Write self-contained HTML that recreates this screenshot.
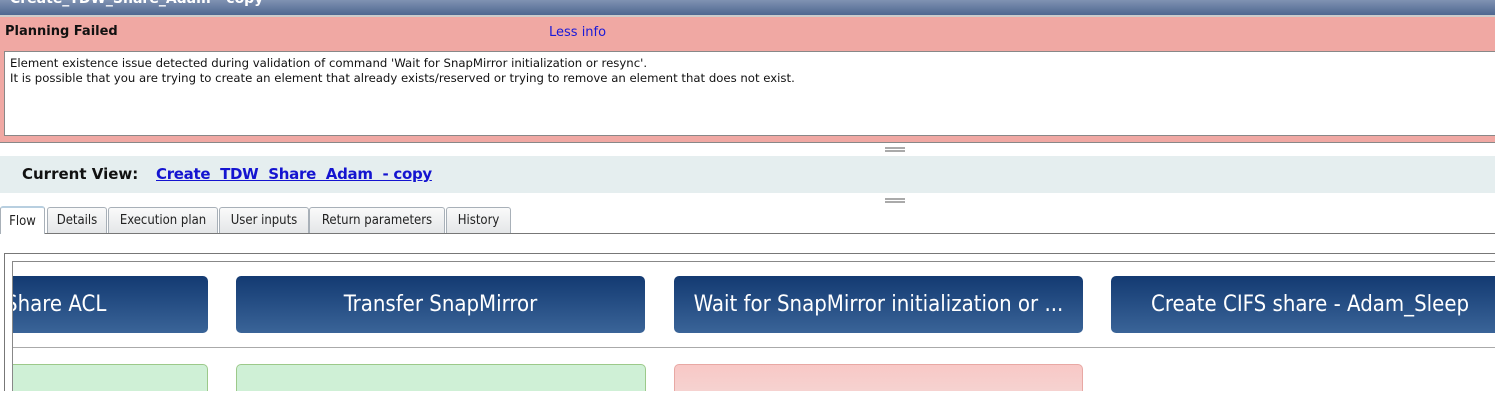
<!DOCTYPE html>
<html><head><style>
*{margin:0;padding:0;box-sizing:border-box}
html,body{width:1495px;height:416px;overflow:hidden}
body{background:#fff;font-family:"DejaVu Sans","Liberation Sans",sans-serif;position:relative}
.a{position:absolute}
.btn{position:absolute;top:276px;height:57px;border-radius:5px;background:linear-gradient(#133a72,#3a6498);color:#fff;font-size:22px;display:flex;align-items:center;justify-content:center;white-space:nowrap;overflow:hidden;font-family:"DejaVu Sans Condensed","DejaVu Sans",sans-serif}
.tab{position:absolute;top:207px;height:26px;border:1px solid #a8b0b8;border-bottom:none;border-radius:3px 3px 0 0;background:linear-gradient(#fafafa,#e4e6e8);font-size:13px;color:#222;display:flex;align-items:center;justify-content:center;font-family:"DejaVu Sans Condensed","DejaVu Sans",sans-serif}
.grip{position:absolute;left:885px;width:20px;height:5px;border-top:2px solid #aaa;border-bottom:2px solid #aaa}
</style></head><body>
<div class="a" style="left:0;top:0;width:1495px;height:15px;background:linear-gradient(#8092b2,#4e6790)"></div>
<div class="a" style="left:10px;top:-9px;color:#fff;font-weight:bold;font-size:14px">Create_TDW_Share_Adam - copy</div>
<div class="a" style="left:0;top:15px;width:1495px;height:2px;background:#ccc"></div>
<div class="a" style="left:0;top:17px;width:1495px;height:126px;background:#f0a8a3;border-bottom:1px solid #888"></div>
<div class="a" style="left:5px;top:24px;font-weight:bold;font-size:13px;color:#111">Planning Failed</div>
<div class="a" style="left:549px;top:25px;font-size:13px;color:#1a1ad8">Less info</div>
<div class="a" style="left:4px;top:51px;width:1491px;height:85px;background:#fff;border:1px solid #888;border-right:none;padding:4px 5px;font-size:11.7px;line-height:15px;color:#111">Element existence issue detected during validation of command 'Wait for SnapMirror initialization or resync'.<br>It is possible that you are trying to create an element that already exists/reserved or trying to remove an element that does not exist.</div>
<div class="grip" style="top:147px"></div>
<div class="a" style="left:0;top:156px;width:1495px;height:37px;background:#e5eeef"></div>
<div class="a" style="left:22px;top:165px;font-weight:bold;font-size:15px;color:#111">Current View:</div>
<div class="a" style="left:156px;top:165px;font-weight:bold;font-size:15px;color:#1414d0;text-decoration:underline;letter-spacing:-0.3px">Create&nbsp;&nbsp;TDW&nbsp;&nbsp;Share&nbsp;&nbsp;Adam&nbsp;&nbsp;-&nbsp;copy</div>
<div class="grip" style="top:198px"></div>
<div class="a" style="left:0;top:233px;width:1495px;height:1px;background:#777"></div>
<div class="tab" style="left:0;top:206px;width:45px;height:28px;background:#fff;border-top:2px solid #b8cfe0">Flow</div>
<div class="tab" style="left:47px;width:60px">Details</div>
<div class="tab" style="left:108px;width:110px">Execution plan</div>
<div class="tab" style="left:219px;width:90px">User inputs</div>
<div class="tab" style="left:309px;width:136px">Return parameters</div>
<div class="tab" style="left:446px;width:65px">History</div>
<div class="a" style="left:4px;top:253px;width:1495px;height:140px;border:1px solid #777;border-bottom:none"></div>
<div class="a" style="left:12px;top:261px;width:1490px;height:132px;border:1px solid #888;border-bottom:none"></div>
<div class="a" style="left:13px;top:347px;width:1482px;height:1px;background:#aaa"></div>
<div class="btn" style="left:13px;width:195px;justify-content:flex-start;border-radius:0 5px 5px 0"><span style="margin-left:-8px">Share ACL</span></div>
<div class="btn" style="left:236px;width:409px">Transfer SnapMirror</div>
<div class="btn" style="left:674px;width:409px">Wait for SnapMirror initialization or ...</div>
<div class="btn" style="left:1111px;width:400px;justify-content:flex-start;padding-left:40px">Create CIFS share - Adam_Sleep</div>
<div class="a" style="left:13px;top:364px;width:195px;height:27px;background:#cff0d6;border:1px solid #9cc98a;border-left:none;border-bottom:none;border-radius:0 5px 0 0"></div>
<div class="a" style="left:236px;top:364px;width:410px;height:27px;background:#cff0d6;border:1px solid #9cc98a;border-bottom:none;border-radius:5px 5px 0 0"></div>
<div class="a" style="left:674px;top:364px;width:409px;height:27px;background:linear-gradient(#f8c8c6,#f6d2d0);border:1px solid #e8a8a4;border-bottom:none;border-radius:5px 5px 0 0"></div>
<div class="a" style="left:0;top:391px;width:1495px;height:25px;background:#fff"></div>
</body></html>
